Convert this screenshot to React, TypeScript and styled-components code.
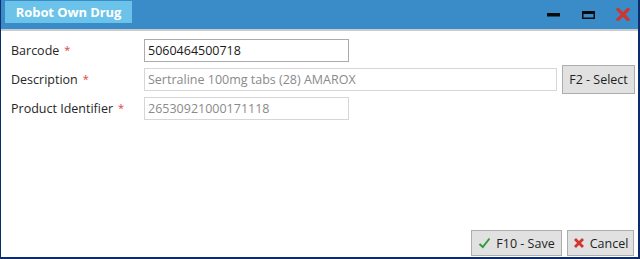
import React from "react";
import styled, { createGlobalStyle } from "styled-components";

const Global = createGlobalStyle`
  html, body { margin: 0; padding: 0; background: #ffffff; }
  * { box-sizing: border-box; }
`;

const Window = styled.div`
  width: 640px;
  height: 259px;
  display: flex;
  flex-direction: column;
  border-left: 1px solid #0d2c6c;
  border-right: 2px solid #0d2c6c;
  border-bottom: 2px solid #0d2c6c;
  font-family: "Open Sans", "Noto Sans", sans-serif;
  background: #ffffff;
`;

const TitleBar = styled.div`
  height: 31px;
  flex: none;
  display: flex;
  align-items: flex-start;
  background: #3a8cc8;
  border-bottom: 2px solid #c9cbcd;
  padding-left: 4px;
`;

const TitleTab = styled.div`
  margin-top: 1px;
  height: 22px;
  width: 127px;
  background: #6cc3ea;
  color: #ffffff;
  font-weight: 700;
  font-size: 13px;
  display: flex;
  align-items: center;
  justify-content: center;
  letter-spacing: -0.1px;
`;

const Controls = styled.div`
  margin-left: auto;
  display: flex;
  align-items: center;
  height: 29px;
`;

const CtrlBtn = styled.div`
  width: 35px;
  height: 29px;
  display: flex;
  align-items: center;
  justify-content: flex-end;
  padding-right: 8px;
`;

const Form = styled.div`
  display: flex;
  flex-direction: column;
  padding: 7px 0 0 10px;
  gap: 5px;
`;

const Row = styled.div`
  display: flex;
  align-items: center;
  height: 24px;
`;

const Label = styled.div`
  width: 133px;
  font-size: 12.5px;
  color: #262626;
`;

const Star = styled.span`
  color: #e0403a;
  font-size: 11px;
  margin-left: 5px;
  position: relative;
  top: -1px;
`;

const Input = styled.div<{ $w: number; $enabled?: boolean }>`
  width: ${(p) => p.$w}px;
  height: 23px;
  border: 1px solid ${(p) => (p.$enabled ? "#ababab" : "#d6d6d6")};
  color: ${(p) => (p.$enabled ? "#1a1a1a" : "#8a8a8a")};
  font-size: 12.5px;
  padding-left: 3px;
  display: flex;
  align-items: center;
`;

const Button = styled.div<{ $w?: number }>`
  height: 26px;
  width: ${(p) => (p.$w ? `${p.$w}px` : "auto")};
  border: 1px solid #adadad;
  background: #e1e1e1;
  color: #1f1f1f;
  font-size: 12.5px;
  display: flex;
  align-items: center;
  justify-content: center;
  gap: 5px;
  padding: 0;
`;

const SelectButton = styled(Button)`
  margin-left: 5px;
  height: 29px;
`;

const Footer = styled.div`
  margin-top: auto;
  display: flex;
  justify-content: flex-end;
  gap: 5px;
  padding: 0 4px 1px 0;
`;

export default function App() {
  return (
    <>
      <Global />
      <Window>
        <TitleBar>
          <TitleTab>Robot Own Drug</TitleTab>
          <Controls>
            <CtrlBtn>
              <svg width="13" height="4" viewBox="0 0 13 4">
                <rect x="0" y="0" width="13" height="3.5" fill="#0b0b0b" />
              </svg>
            </CtrlBtn>
            <CtrlBtn>
              <svg width="13" height="8" viewBox="0 0 13 8">
                <rect x="0.75" y="0.75" width="11.5" height="6.5" fill="none" stroke="#0b0b0b" strokeWidth="1.5" />
                <rect x="0" y="0" width="13" height="3" fill="#0b0b0b" />
              </svg>
            </CtrlBtn>
            <CtrlBtn>
              <svg width="14" height="13" viewBox="0 0 14 13">
                <path d="M2 1.5 L12 11.5 M12 1.5 L2 11.5" stroke="#d0352f" strokeWidth="3.2" strokeLinecap="square" />
              </svg>
            </CtrlBtn>
          </Controls>
        </TitleBar>
        <Form>
          <Row>
            <Label>
              Barcode<Star>*</Star>
            </Label>
            <Input $w={205} $enabled>5060464500718</Input>
          </Row>
          <Row>
            <Label>
              Description<Star>*</Star>
            </Label>
            <Input $w={413}>Sertraline 100mg tabs (28) AMAROX</Input>
            <SelectButton $w={73}>F2 - Select</SelectButton>
          </Row>
          <Row>
            <Label>
              Product Identifier<Star>*</Star>
            </Label>
            <Input $w={205}>26530921000171118</Input>
          </Row>
        </Form>
        <Footer>
          <Button $w={91}>
            <svg width="13" height="12" viewBox="0 0 13 12">
              <path d="M1.5 7 L4.8 10 L11.5 1.5" fill="none" stroke="#2f9e3a" strokeWidth="2" />
            </svg>
            F10 - Save
          </Button>
          <Button $w={67}>
            <svg width="12" height="12" viewBox="0 0 12 12">
              <path d="M2 2 L10 10 M10 2 L2 10" stroke="#d0352f" strokeWidth="2.8" />
            </svg>
            Cancel
          </Button>
        </Footer>
      </Window>
    </>
  );
}
